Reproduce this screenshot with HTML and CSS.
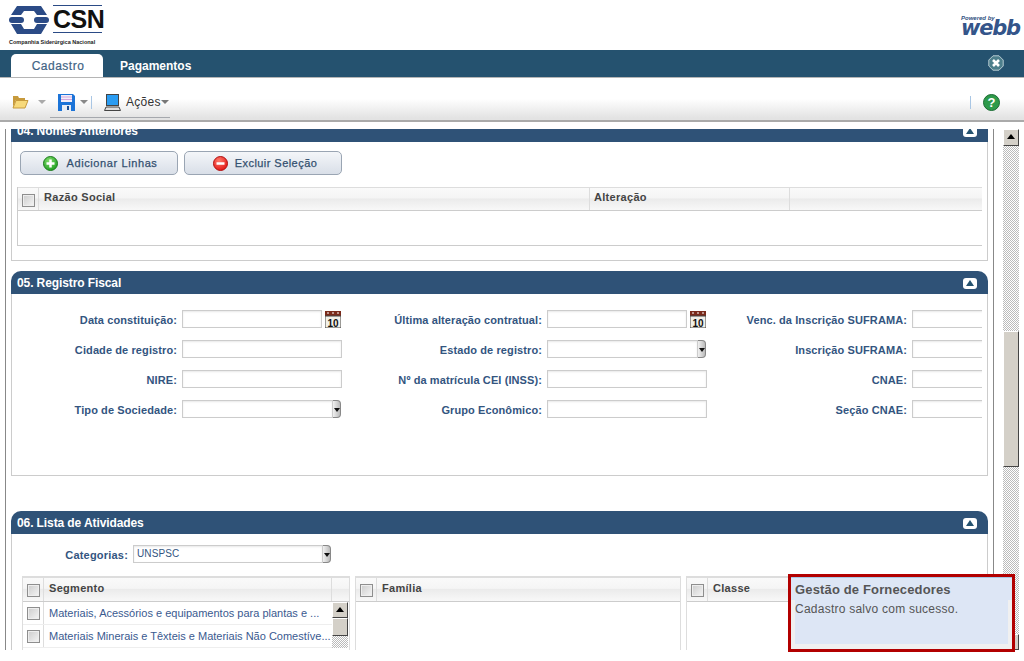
FILE: index.html
```html
<!DOCTYPE html>
<html lang="pt">
<head>
<meta charset="utf-8">
<title>CSN - Gestão de Fornecedores</title>
<link rel="stylesheet" href="styles.css">
</head>
<body>
<header class="top">
  <div class="logo">
    <div class="logo-main">
      <svg class="emblem" width="40" height="28" viewBox="0 0 40 28"><path fill="#2b4b86" d="M8 0H32L38 9H28L25 5H15L12 9H2ZM2 18H12L15 23H25L28 18H38L32 28H8Z"/><rect fill="#2b4b86" x="0" y="11" width="15" height="6" rx="3"/><rect fill="#2b4b86" x="25" y="11" width="15" height="6" rx="3"/></svg>
      <div class="logo-word">CSN</div>
    </div>
    <div class="logo-sub">Companhia Siderúrgica Nacional</div>
  </div>
  <div class="webb"><span class="webb-by">Powered by</span><span class="webb-name">webb</span></div>
</header>
<nav class="nav">
  <a class="tab tab-on">Cadastro</a>
  <a class="tab">Pagamentos</a>
  <svg class="close" width="16" height="16" viewBox="0 0 16 16"><path fill="#4d7f8c" stroke="#b7cbd2" d="M5 .8H11L15.200 5V11L11 15.200H5L.8 11V5Z"/><path stroke="#fff" stroke-width="2.600" d="M5 5L11 11M11 5L5 11"/></svg>
</nav>
<div class="toolbar">
  <svg class="t-folder" width="17" height="14" viewBox="0 0 17 14"><path fill="#c79a3c" d="M1 1H6L7 3H13V5H4L1 12Z"/><path fill="#f7d97a" stroke="#c79a3c" d="M4 5.500H16L13 13H1Z"/></svg>
  <span class="caret caret-a"></span>
  <svg class="t-save" width="17" height="17" viewBox="0 0 17 17"><path fill="#1c74d8" d="M0 0H15L17 2V17H0Z"/><rect fill="#f3eef8" x="3" y="1" width="11" height="7"/><path stroke="#d3a6dd" d="M3 3H14M3 5.500H14"/><rect fill="#e8eef5" x="4" y="11" width="9" height="6"/><rect fill="#1a4f96" x="9" y="12" width="2" height="4"/></svg>
  <span class="caret caret-b"></span>
  <span class="t-sep"></span>
  <svg class="t-pc" width="17" height="17" viewBox="0 0 17 17"><rect fill="#444" x="2" y="0" width="13" height="12"/><rect fill="#2a9cf2" x="3" y="1" width="11" height="10"/><path fill="#ddd" stroke="#444" d="M2 13H15L16.500 16.500H.5Z"/></svg>
  <span class="t-label">Ações</span>
  <span class="caret caret-c"></span>
  <span class="t-sep t-sep-r"></span>
  <svg class="t-help" width="17" height="17" viewBox="0 0 17 17"><circle cx="8.500" cy="8.500" r="8" fill="#2e9a4a" stroke="#1b6b33"/><text x="8.500" y="13" text-anchor="middle" class="help-q">?</text></svg>
</div>
<main class="main">
  <div class="scroller">
    <section class="sec sec-04">
      <h2 class="sec-h">04. Nomes Anteriores<span class="collapse"></span></h2>
      <div class="sec-b b-04">
        <div class="btns">
          <button class="btn btn-a"><svg width="15" height="15" viewBox="0 0 15 15"><defs><radialGradient id="gg" cx=".4" cy=".3" r=".8"><stop offset="0" stop-color="#7fdc6a"/><stop offset="1" stop-color="#179a1c"/></radialGradient></defs><circle cx="7.500" cy="7.500" r="7" fill="url(#gg)" stroke="#1d7a1d"/><path stroke="#fff" stroke-width="2.500" d="M7.500 3.500V11.500M3.500 7.500H11.500"/></svg><span>Adicionar Linhas</span></button>
          <button class="btn btn-x"><svg width="15" height="15" viewBox="0 0 15 15"><defs><radialGradient id="gr" cx=".4" cy=".3" r=".8"><stop offset="0" stop-color="#ff7a6a"/><stop offset="1" stop-color="#e00c0c"/></radialGradient></defs><circle cx="7.500" cy="7.500" r="7" fill="url(#gr)" stroke="#b01010"/><path stroke="#fff" stroke-width="2.500" d="M3.500 7.500H11.500"/></svg><span>Excluir Seleção</span></button>
        </div>
        <div class="tbl">
          <div class="tbl-h">
            <div class="c-chk"><span class="chk"></span></div>
            <div class="c-a">Razão Social</div>
            <div class="c-b">Alteração</div>
          </div>
          <div class="tbl-empty"></div>
        </div>
      </div>
    </section>
    <section class="sec sec-05">
      <h2 class="sec-h">05. Registro Fiscal<span class="collapse"></span></h2>
      <div class="sec-b b-05">
        <div class="form">
          <label>Data constituição:</label><div class="f"><input class="inp inp-d"><svg class="cal" width="16" height="17" viewBox="0 0 16 17"><rect fill="#7a2a1a" width="16" height="5"/><rect fill="#f2f0e8" y="5" width="16" height="12" stroke="#444"/><path stroke="#fff" d="M3 1V3M8 1V3M13 1V3"/><text x="8" y="15.500" text-anchor="middle" class="cal-t">10</text></svg></div>
          <label>Última alteração contratual:</label><div class="f"><input class="inp inp-d"><svg class="cal" width="16" height="17" viewBox="0 0 16 17"><rect fill="#7a2a1a" width="16" height="5"/><rect fill="#f2f0e8" y="5" width="16" height="12" stroke="#444"/><path stroke="#fff" d="M3 1V3M8 1V3M13 1V3"/><text x="8" y="15.500" text-anchor="middle" class="cal-t">10</text></svg></div>
          <label>Venc. da Inscrição SUFRAMA:</label><div class="f"><input class="inp"></div>
          <label>Cidade de registro:</label><div class="f"><input class="inp"></div>
          <label>Estado de registro:</label><div class="f sel"><div class="inp sel-v"></div><span class="sel-b"></span></div>
          <label>Inscrição SUFRAMA:</label><div class="f"><input class="inp"></div>
          <label>NIRE:</label><div class="f"><input class="inp"></div>
          <label>Nº da matrícula CEI (INSS):</label><div class="f"><input class="inp"></div>
          <label>CNAE:</label><div class="f"><input class="inp"></div>
          <label>Tipo de Sociedade:</label><div class="f sel"><div class="inp sel-v"></div><span class="sel-b"></span></div>
          <label>Grupo Econômico:</label><div class="f"><input class="inp"></div>
          <label>Seção CNAE:</label><div class="f"><input class="inp"></div>
        </div>
      </div>
    </section>
    <section class="sec sec-06">
      <h2 class="sec-h">06. Lista de Atividades<span class="collapse"></span></h2>
      <div class="sec-b b-06">
        <div class="cat"><label>Categorias:</label><div class="f sel cat-sel"><div class="inp sel-v">UNSPSC</div><span class="sel-b"></span></div></div>
        <div class="lists">
          <div class="list list-1">
            <div class="tbl-h lh">
              <div class="c-chk"><span class="chk"></span></div>
              <div class="c-x">Segmento</div>
              <div class="c-sb"></div>
            </div>
            <div class="list-body">
              <div class="rows">
                <div class="row"><div class="c-chk"><span class="chk"></span></div><div class="cell">Materiais, Acessórios e equipamentos para plantas e ...</div></div>
                <div class="row"><div class="c-chk"><span class="chk"></span></div><div class="cell">Materiais Minerais e Têxteis e Materiais Não Comestíve...</div></div>
              </div>
              <div class="mini-sb"><span class="mini-up"></span><span class="mini-th"></span></div>
            </div>
          </div>
          <div class="list list-2">
            <div class="tbl-h lh"><div class="c-chk"><span class="chk"></span></div><div class="c-x">Família</div></div>
          </div>
          <div class="list list-3">
            <div class="tbl-h lh"><div class="c-chk"><span class="chk"></span></div><div class="c-x">Classe</div></div>
          </div>
        </div>
      </div>
    </section>
  </div>
  <div class="sb">
    <span class="sb-up"></span>
    <span class="sb-track"><span class="sb-th"></span></span>
    <span class="sb-dn"></span>
  </div>
</main>
<aside class="toast">
  <div class="toast-t">Gestão de Fornecedores</div>
  <div class="toast-m">Cadastro salvo com sucesso.</div>
</aside>
</body>
</html>
```
FILE: styles.css
```css
* { box-sizing: border-box; }
html, body { margin: 0; height: 661px; overflow: hidden; background: #fff; }
body { font-family: "Liberation Sans", Arial, sans-serif; font-size: 11px; position: relative; }

.top { height: 50px; display: flex; justify-content: space-between; padding: 5px 3px 0 9px; }
.logo { width: 96px; }
.logo-main { display: flex; align-items: flex-start; height: 28px; gap: 4px; }
.emblem { margin-top: 1px; }
.logo-word { font-weight: 700; font-size: 25px; line-height: 27px; letter-spacing: -.5px; color: #111; border-top: 1px solid #2b4b86; border-bottom: 1px solid #2b4b86; height: 28px; width: 49px; }
.logo-sub { font-size: 5.500px; font-weight: 700; color: #222; margin-top: 6px; white-space: nowrap; }
.webb { display: flex; flex-direction: column; margin-top: 10px; width: 60px; }
.webb-by { font-size: 6px; font-weight: 700; font-style: italic; color: #2f4f7f; line-height: 6px; }
.webb-name { font: italic 700 21px/15px "DejaVu Sans", sans-serif; color: #34558a; letter-spacing: -1.200px; white-space: nowrap; }

.nav { height: 28px; background: #25526f; border-bottom: 1px solid #b5b5b5; display: flex; align-items: flex-end; padding: 0 20px 0 11px; position: relative; }
.tab { height: 23px; width: 92px; display: flex; justify-content: center; align-items: center; font-size: 12px; color: #fff; font-weight: 700; }
.tab + .tab { width: 106px; justify-content: flex-start; padding-left: 17px; }
.tab-on { background: #fff; color: #3f6485; border-radius: 5px 5px 0 0; font-weight: 400; letter-spacing: .5px; padding-left: 2px; -webkit-text-stroke: .2px #3f6485; }
.close { margin: 0 0 6px auto; }

.toolbar { height: 44px; display: flex; align-items: center; padding: 6px 24px 0 12px; background: linear-gradient(#fff 0, #fff 50%, #e3e3e3 95%); border-bottom: 2px solid #aaa; position: relative; }
.toolbar::after { content: ""; position: absolute; left: 50px; width: 120px; height: 1px; background: #a5a8ad; top: 39px; }
.caret { width: 0; height: 0; border: 4px solid transparent; border-top: 4px solid #aaa; border-bottom: 0; }
.caret-a { margin-left: 9px; }
.t-save { margin-left: 12px; }
.caret-b { margin-left: 5px; border-top-color: #888; }
.t-sep { width: 1px; height: 13px; background: #a9c6e4; margin-left: 3px; }
.t-pc { margin-left: 12px; }
.t-label { margin-left: 5px; color: #333; font-size: 12px; letter-spacing: .3px; }
.caret-c { border-top-color: #777; margin-left: 0; }
.t-sep-r { margin-left: auto; }
.t-help { margin-left: 12px; }
.help-q { font: 700 13px "Liberation Sans", sans-serif; fill: #fff; }

.main { margin-top: 7px; height: 521px; display: flex; overflow: hidden; }
.scroller { margin-left: 5px; width: 989px; border-left: 1px solid #888; border-right: 1px solid #888; padding: 0 5px; overflow: hidden; }
.sec-04 { margin-top: -10px; }
.sec-05 { margin-top: 10px; }
.sec-06 { margin-top: 35px; }
.sec-h { margin: 0; height: 23px; background: #2f5277; color: #fff; font-size: 12px; line-height: 21px; padding: 2px 11px 0 6px; border-radius: 10px 10px 0 0; display: flex; justify-content: space-between; align-items: center; letter-spacing: -.1px; }
.collapse { width: 14px; height: 11px; background: #fff; border-radius: 3px; position: relative; }
.collapse::after { content: ""; position: absolute; left: 3px; top: 2px; border: 4px solid transparent; border-top: 0; border-bottom: 6px solid #25526f; }
.sec-b { border: 1px solid #ccc; border-top: 0; padding: 0 5px; overflow: hidden; }
.b-04 { height: 119px; padding-top: 9px; }
.b-05 { height: 182px; padding-top: 16px; }
.b-06 { height: 200px; padding-top: 11px; }

.btns { display: flex; gap: 6px; padding-left: 3px; }
.btn { width: 158px; height: 24px; border: 1px solid #9aa5b3; border-radius: 5px; background: linear-gradient(#f4f6f9, #d9dfe8); display: flex; align-items: center; justify-content: center; gap: 9px; padding: 0; font: 400 11px "Liberation Sans", sans-serif; color: #33506f; letter-spacing: .6px; }
.btn-a { padding-left: 2px; }
.btn-x { letter-spacing: .45px; padding-left: 4px; gap: 7px; }
.btn span { -webkit-text-stroke: .25px #33506f; }

.tbl { margin-top: 12px; border-left: 1px solid #ccc; border-bottom: 1px solid #ccc; height: 59px; }
.tbl-h { height: 24px; display: flex; border-top: 1px solid #ddd; border-bottom: 1px solid #ccc; background: linear-gradient(#fafafa 0, #f5f5f5 45%, #ebebeb 50%, #f8f8f8 100%); font-weight: 700; color: #444; letter-spacing: .3px; }
.c-chk { width: 21px; flex: none; display: flex; align-items: center; justify-content: center; border-right: 1px solid #ddd; padding-top: 2px; }
.chk { display: block; width: 13px; height: 13px; border: 1px solid #8e8e8e; background: linear-gradient(135deg, #ccc, #f5f5f5); box-shadow: inset 0 0 0 1px #eee; }
.c-a { width: 551px; padding: 3px 0 0 5px; border-right: 1px solid #ddd; }
.c-b { width: 200px; padding: 3px 0 0 4px; border-right: 1px solid #ddd; }

.form { display: grid; grid-template-columns: 160px 160px 195px 160px 195px 160px; column-gap: 5px; row-gap: 12px; grid-auto-rows: 18px; overflow: hidden; }
label { text-align: right; font-weight: 700; color: #33557f; line-height: 21px; white-space: nowrap; letter-spacing: .1px; }
.f { display: flex; align-items: flex-start; }
.inp { display: block; width: 160px; height: 18px; border: 1px solid #ccc; background: #fff; padding: 0 3px; font: 10px "Liberation Sans", sans-serif; color: #33557f; box-shadow: inset 0 1px 2px #e8e8e8; outline: 0; border-radius: 0; }
.inp-d { width: 140px; }
.cal { margin: 1px 0 0 3px; flex: none; }
.cal-t { font: 700 10px "Liberation Sans", sans-serif; fill: #111; }
.sel-v { width: 151px; line-height: 16px; letter-spacing: .1px; }
.sel-b { width: 8px; height: 18px; margin-left: 0; background: linear-gradient(90deg, #f0f0f0, #bbb); border: 1px solid #888; border-left: 0; border-radius: 0 4px 4px 0; position: relative; }
.sel-b::after { content: ""; position: absolute; left: 1px; top: 7px; border: 3px solid transparent; border-top: 4px solid #111; border-bottom: 0; }

.cat { display: flex; gap: 5px; padding-left: 5px; width: 320px; height: 19px; }
.cat label { width: 106px; letter-spacing: .2px; }
.cat-sel .sel-v { width: 190px; }
.lists { display: flex; gap: 5px; margin-top: 12px; padding-left: 5px; }
.list { height: 140px; flex: none; border-top: 2px solid #ddd; border-left: 1px solid #ddd; border-right: 1px solid #ddd; }
.list-1 { width: 328px; }
.list-2 { width: 326px; }
.list-3 { width: 400px; border-right: 0; }
.lh { border-top: 0; height: 24px; }
.lh .c-chk { width: 21px; }
.c-x { flex: 1; padding: 4px 0 0 5px; }
.c-sb { width: 18px; border-left: 1px solid #ddd; }
.list-body { display: flex; }
.rows { flex: 1; min-width: 0; }
.row { display: flex; height: 23px; border-bottom: 1px solid #eee; }
.row .c-chk { padding-top: 0; }
.cell { padding: 5px 0 0 5px; color: #3a5a90; white-space: nowrap; overflow: hidden; }
.mini-sb { width: 16px; margin-right: 1px; flex: none; display: flex; flex-direction: column; background: repeating-conic-gradient(#bbb 0 25%, #fff 0 50%) 0 0 / 2px 2px; }
.mini-up, .sb-up, .sb-dn { display: block; height: 16px; background: #d4d0c8; border: 1px solid; border-color: #fff #444 #444 #fff; position: relative; flex: none; }
.mini-up::after, .sb-up::after { content: ""; position: absolute; left: 3px; top: 4px; border: 4px solid transparent; border-top: 0; border-bottom: 5px solid #000; }
.mini-th { display: block; height: 18px; background: #d4d0c8; border: 1px solid; border-color: #fff #444 #444 #fff; }

.sb { margin-left: 9px; width: 16px; height: 521px; display: flex; flex-direction: column; }
.sb-up { height: 17px; }
.sb-track { flex: 1; display: flex; flex-direction: column; padding-top: 185px; background: repeating-conic-gradient(#bbb 0 25%, #fff 0 50%) 0 0 / 2px 2px; }
.sb-th { display: block; height: 136px; background: #d4d0c8; border: 1px solid; border-color: #fff #444 #444 #fff; }

.toast { position: absolute; left: 788px; top: 574px; width: 227px; height: 78px; border: 3px solid #b20000; background: #f0f0f0; }
.toast-t { height: 23px; background: #dde6f5; color: #555; font-weight: 700; font-size: 13px; padding: 4px 0 0 4px; letter-spacing: .15px; border-top: 1px solid #a9c6e4; }
.toast-m { margin: 0 4px 0 4px; height: 44px; padding-top: 2px; background: #dde6f5; color: #555; font-size: 12px; letter-spacing: .24px; }
```
